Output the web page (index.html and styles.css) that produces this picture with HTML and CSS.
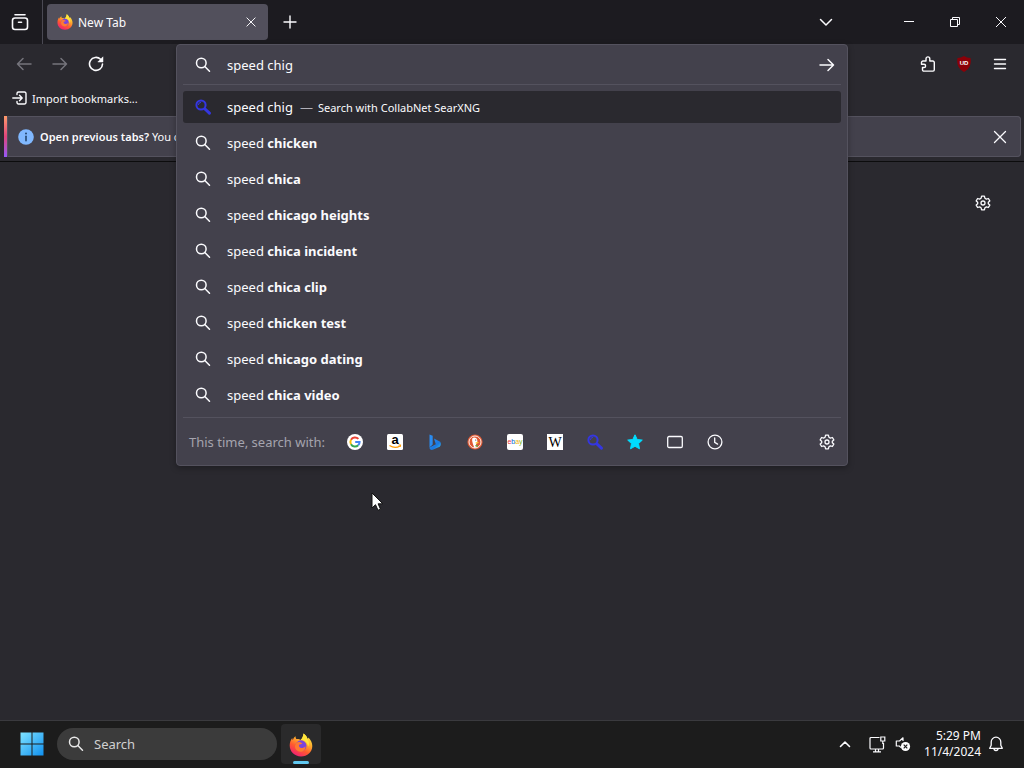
FILE: index.html
```html
<!DOCTYPE html>
<html lang="en">
<head>
  <meta charset="UTF-8">
  <meta name="viewport" content="width=device-width, initial-scale=1.0">
  <title>New Tab</title>
  <link rel="stylesheet" href="styles.css">
</head>
<body>
  <!-- shared icons -->
  <svg class="sprite" aria-hidden="true">
    <defs>
      <linearGradient id="fox-body" x1="0.8" y1="0" x2="0.25" y2="1">
        <stop offset="0" stop-color="#fff24a"/>
        <stop offset="0.35" stop-color="#ffb02e"/>
        <stop offset="0.65" stop-color="#ff5a2e"/>
        <stop offset="1" stop-color="#f0197b"/>
      </linearGradient>
      <linearGradient id="win-blue" x1="0" y1="0" x2="1" y2="1">
        <stop offset="0" stop-color="#7fe3ff"/>
        <stop offset="1" stop-color="#1090f0"/>
      </linearGradient>
      <linearGradient id="bing-blue" x1="0" y1="0" x2="1" y2="1">
        <stop offset="0" stop-color="#2a8cf0"/>
        <stop offset="0.6" stop-color="#1b78e0"/>
        <stop offset="1" stop-color="#35c6ee"/>
      </linearGradient>
    </defs>
    <symbol id="search" viewBox="0 0 16 16">
      <circle cx="6.3" cy="6" r="4.8" fill="none" stroke="currentColor" stroke-width="1.5"/>
      <path d="M9.8 9.5l4.700 4.700" stroke="currentColor" stroke-width="1.5" stroke-linecap="round"/>
    </symbol>
    <symbol id="search-blue" viewBox="0 0 16 16">
      <circle cx="6" cy="6" r="4.6" fill="none" stroke="#3436e0" stroke-width="2"/>
      <path d="M3.4 6a2.6 2.6 0 0 1 2.6-2.6" fill="none" stroke="#3436e0" stroke-width="1"/>
      <path d="M10 10l4.4 4.2" stroke="#3436e0" stroke-width="3" stroke-linecap="round"/>
    </symbol>
    <symbol id="close" viewBox="0 0 16 16">
      <path d="M2.5 2.5l11 11M13.5 2.5l-11 11" stroke="currentColor" stroke-width="1.3" stroke-linecap="round"/>
    </symbol>
    <symbol id="gear" viewBox="0 0 16 16">
      <path d="M6.6 1.2h2.8l.5 2 1.5.9 2-.6 1.4 2.4-1.5 1.4v1.4l1.5 1.4-1.4 2.4-2-.6-1.5.9-.5 2H6.6l-.5-2-1.5-.9-2 .6-1.4-2.4 1.5-1.4V7.3l-1.5-1.4 1.4-2.4 2 .6 1.5-.9z" fill="none" stroke="currentColor" stroke-width="1.3" stroke-linejoin="round"/>
      <circle cx="8" cy="8" r="2" fill="none" stroke="currentColor" stroke-width="1.3"/>
    </symbol>
    <symbol id="arrow" viewBox="0 0 16 16">
      <path d="M1 8h13.5M9 2.5L14.5 8 9 13.5" fill="none" stroke="currentColor" stroke-width="1.5" stroke-linecap="round" stroke-linejoin="round"/>
    </symbol>
    <symbol id="firefox" viewBox="0 0 24 24">
      <path d="M14.5 .5c2.2 1.6 3.6 3.5 4.1 5.4.6-.3.8-.9.8-1.5 2.5 2.5 3.9 5.3 3.9 8.600 0 6-5 10.5-11.3 10.5S.7 18.8.7 12.6c0-2.8.8-5.3 2.5-7.6.1.9.3 1.5.7 2 .6-1.7 1.3-2.7 2.6-3.7 0 1.1.2 2 .8 2.8 2-.2 3.3.2 4.3 1 1.7-1.8 2.8-4 2.9-6.6z" fill="url(#fox-body)"/>
      <circle cx="12" cy="12.8" r="5.5" fill="#7a45dc"/>
      <path d="M7.5 9.5c2.2-1.2 4.5-.5 5.8 1-1 .9-2.3 1-3.3 1.3-.5 1.9.7 3.3 2.6 3.3 1.6 0 2.9-.8 4-1.9-.3 4-2.8 5.7-5.3 5.5-3.5-.2-5.5-2.9-5.3-5.9z" fill="#ff7a30"/>
      <path d="M14.5 .5c2.2 1.6 3.6 3.5 4.1 5.4 1.8 2.6 1.6 5.4.5 7.7-.3-3.3-2.2-5.2-4.7-6.4-1.1-.5-1.8-.3-2.8-.1 1.7-1.8 2.8-4 2.900-6.6z" fill="#ffe53b"/>
    </symbol>
  </svg>

  <div class="window">
    <header class="titlebar">
      <button class="icon-btn view-btn" aria-label="Firefox View">
        <svg width="18" height="18" viewBox="0 0 18 18" fill="none" stroke="currentColor" stroke-width="1.6" stroke-linecap="round">
          <path d="M4 1.8h10"/>
          <rect x="1.5" y="5" width="15" height="11.5" rx="2.5"/>
          <path d="M7.5 9.2h3"/>
        </svg>
      </button>
      <div class="tab">
        <svg class="i16"><use href="#firefox"/></svg>
        <span class="tab-title">New Tab</span>
        <button class="icon-btn" aria-label="Close tab"><svg class="i12"><use href="#close"/></svg></button>
      </div>
      <button class="icon-btn new-tab" aria-label="Open a new tab">
        <svg width="14" height="14" viewBox="0 0 14 14"><path d="M7 1v12M1 7h12" stroke="currentColor" stroke-width="1.4" stroke-linecap="round"/></svg>
      </button>
      <button class="icon-btn all-tabs" aria-label="List all tabs">
        <svg width="14" height="14" viewBox="0 0 14 14"><path d="M1.5 4.5L7 10l5.5-5.5" fill="none" stroke="currentColor" stroke-width="1.5" stroke-linecap="round" stroke-linejoin="round"/></svg>
      </button>
      <div class="window-controls">
        <button class="icon-btn" aria-label="Minimize">
          <svg width="10" height="10" viewBox="0 0 10 10"><path d="M0 4.5h10" stroke="currentColor"/></svg>
        </button>
        <button class="icon-btn" aria-label="Restore">
          <svg width="10" height="10" viewBox="0 0 10 10" fill="none" stroke="currentColor"><path d="M.5 2.5h7v7h-7zM2.5 2.5v-2h7v7h-2"/></svg>
        </button>
        <button class="icon-btn" aria-label="Close">
          <svg width="12" height="12" viewBox="0 0 12 12"><path d="M1 1l10 10M11 1L1 11" stroke="currentColor"/></svg>
        </button>
      </div>
    </header>

    <div class="toolbar">
      <div class="nav-left">
        <button class="icon-btn" aria-label="Back" disabled><svg class="i16 flip"><use href="#arrow"/></svg></button>
        <button class="icon-btn" aria-label="Forward" disabled><svg class="i16"><use href="#arrow"/></svg></button>
        <button class="icon-btn" aria-label="Reload">
          <svg width="16" height="16" viewBox="0 0 16 16">
            <path d="M12.6 3.3A6.5 6.5 0 1 0 14.5 8" fill="none" stroke="currentColor" stroke-width="1.6" stroke-linecap="round"/>
            <path d="M15 .8v5.2H9.8z" fill="currentColor" stroke="currentColor" stroke-width=".5" stroke-linejoin="round"/>
          </svg>
        </button>
      </div>

      <div class="urlbar-slot">
        <div class="urlbar">
          <form class="url-row">
            <svg class="i16"><use href="#search"/></svg>
            <input class="url-input" type="text" value="speed chig" aria-label="Search or enter address">
            <button class="icon-btn" aria-label="Go"><svg class="i16"><use href="#arrow"/></svg></button>
          </form>
          <ul class="results">
            <li class="result selected"><svg class="i16"><use href="#search-blue"/></svg><span>speed chig</span><span class="dash">—</span><span class="action">Search with CollabNet SearXNG</span></li>
            <li class="result"><svg class="i16"><use href="#search"/></svg><span>speed <b>chicken</b></span></li>
            <li class="result"><svg class="i16"><use href="#search"/></svg><span>speed <b>chica</b></span></li>
            <li class="result"><svg class="i16"><use href="#search"/></svg><span>speed <b>chicago heights</b></span></li>
            <li class="result"><svg class="i16"><use href="#search"/></svg><span>speed <b>chica incident</b></span></li>
            <li class="result"><svg class="i16"><use href="#search"/></svg><span>speed <b>chica clip</b></span></li>
            <li class="result"><svg class="i16"><use href="#search"/></svg><span>speed <b>chicken test</b></span></li>
            <li class="result"><svg class="i16"><use href="#search"/></svg><span>speed <b>chicago dating</b></span></li>
            <li class="result"><svg class="i16"><use href="#search"/></svg><span>speed <b>chica video</b></span></li>
          </ul>
          <div class="engines">
            <span class="engines-label">This time, search with:</span>
            <button class="icon-btn" aria-label="Google">
              <svg class="i16" viewBox="0 0 16 16" fill="none" stroke-width="2">
                <circle cx="8" cy="8" r="8" fill="#fff"/>
                <path d="M11.4 4.9A4.6 4.6 0 0 0 4 5.7" stroke="#ea4335"/>
                <path d="M4 5.7a4.6 4.6 0 0 0 0 4.6" stroke="#fbbc05"/>
                <path d="M4 10.3a4.6 4.6 0 0 0 7.2 1" stroke="#34a853"/>
                <path d="M11.2 11.3A4.6 4.6 0 0 0 12.6 8H8.2" stroke="#4285f4"/>
              </svg>
            </button>
            <button class="icon-btn" aria-label="Amazon">
              <svg class="i16" viewBox="0 0 16 16">
                <rect width="16" height="16" rx="1.5" fill="#fff"/>
                <text class="logo-amazon" x="8" y="10" text-anchor="middle">a</text>
                <path d="M2.500 11.500q5.500 3.600 10.500.4" fill="none" stroke="#f90" stroke-width="1.2"/>
                <path d="M11.5 11l2.200-.1-.5 2.100" fill="none" stroke="#f90"/>
              </svg>
            </button>
            <button class="icon-btn" aria-label="Bing">
              <svg class="i16" viewBox="0 0 16 16">
                <path d="M2.500 .5l3.200 1.200v8.800L2.500 13.500z" fill="#2a8cf0"/>
                <path d="M7 4.6l6.200 3.100c1.200 2 .7 3.800-.5 5l-7 3.100c-2 .4-3.200-.8-3.200-2.300l6.300-3.300z" fill="url(#bing-blue)"/>
              </svg>
            </button>
            <button class="icon-btn" aria-label="DuckDuckGo">
              <svg class="i16" viewBox="0 0 16 16">
                <circle cx="8" cy="8" r="7.600" fill="#de5833"/>
                <circle cx="8" cy="8" r="6" fill="#de5833" stroke="#fff" stroke-width=".9"/>
                <path d="M5.200 4.400c1.300-1.500 4.400-1.200 5 1.300.3 1.300.1 2.300.1 3.200l-1.400 1.200.9 3.200-2.400.6c-.9-2.900-2.900-6.600-2.200-9.500z" fill="#fff"/>
                <path d="M8.600 8.300l3.200-.3-.6 1.300-2.600.3z" fill="#fdc828"/>
                <path d="M8.300 11l2.700.2-.6 1.800-2-.7z" fill="#67a843"/>
                <circle cx="8.700" cy="6" r=".6" fill="#333"/>
              </svg>
            </button>
            <button class="icon-btn" aria-label="eBay">
              <svg class="i16" viewBox="0 0 16 16">
                <rect width="16" height="16" rx="2" fill="#fff"/>
                <text class="logo-ebay" x="8" y="10" text-anchor="middle"><tspan fill="#e53238">e</tspan><tspan fill="#0064d2">b</tspan><tspan fill="#f5af02">a</tspan><tspan fill="#86b817">y</tspan></text>
              </svg>
            </button>
            <button class="icon-btn" aria-label="Wikipedia">
              <svg class="i16" viewBox="0 0 16 16">
                <rect width="16" height="16" fill="#fff"/>
                <text class="logo-wiki" x="8" y="13" text-anchor="middle">W</text>
              </svg>
            </button>
            <button class="icon-btn" aria-label="CollabNet SearXNG"><svg class="i16"><use href="#search-blue"/></svg></button>
            <button class="icon-btn" aria-label="Bookmarks">
              <svg class="i16" viewBox="0 0 16 16"><path d="M8 .8l2.200 4.700 5.100.6-3.800 3.500 1 5.200L8 12.300l-4.500 2.500 1-5.200L.7 6.100l5.100-.6z" fill="#00ddff" stroke="#00ddff" stroke-linejoin="round"/></svg>
            </button>
            <button class="icon-btn" aria-label="Tabs">
              <svg class="i16" viewBox="0 0 16 16"><rect x=".7" y="2.500" width="14.600" height="11" rx="1.300" fill="none" stroke="currentColor" stroke-width="1.300"/></svg>
            </button>
            <button class="icon-btn" aria-label="History">
              <svg class="i16" viewBox="0 0 16 16" fill="none" stroke="currentColor" stroke-width="1.3" stroke-linecap="round"><circle cx="8" cy="8" r="6.900"/><path d="M7.700 4v4.300l2.900 1.800"/></svg>
            </button>
            <button class="icon-btn engines-settings" aria-label="Search settings"><svg class="i16"><use href="#gear"/></svg></button>
          </div>
        </div>
      </div>

      <div class="nav-right">
        <button class="icon-btn" aria-label="Extensions">
          <svg width="16" height="16" viewBox="0 0 16 16"><path d="M6 5V2.800a1.900 1.900 0 0 1 3.800 0V5h3a1.500 1.500 0 0 1 1.500 1.500v7.300a1.300 1.300 0 0 1-1.300 1.300H3.800a1.300 1.300 0 0 1-1.300-1.300v-2.300H4a1.600 1.600 0 0 0 0-3.200H1.500V6.500A1.500 1.500 0 0 1 3 5z" fill="none" stroke="currentColor" stroke-width="1.400" stroke-linejoin="round"/></svg>
        </button>
        <button class="icon-btn" aria-label="uBlock Origin">
          <svg width="16" height="16" viewBox="0 0 16 16">
            <path d="M8 0c2 1.300 4 1.800 6.500 1.900C15.600 8 13.500 12.800 8 16 2.500 12.800.4 8 1.500 1.900 4 1.800 6 1.300 8 0z" fill="#8b0008"/>
            <text class="logo-ublock" x="8" y="9" text-anchor="middle">UD</text>
          </svg>
        </button>
        <button class="icon-btn" aria-label="Open application menu">
          <svg width="14" height="14" viewBox="0 0 14 14"><path d="M1.500 2.500h11M1.500 7h11M1.500 11.500h11" stroke="currentColor" stroke-width="1.400" stroke-linecap="round"/></svg>
        </button>
      </div>
    </div>

    <div class="bookmarks">
      <button class="bookmark">
        <svg width="16" height="16" viewBox="0 0 16 16" fill="none" stroke="currentColor" stroke-width="1.400" stroke-linecap="round" stroke-linejoin="round">
          <path d="M5 4.500V3.500A1.500 1.500 0 0 1 6.500 2h6A1.500 1.500 0 0 1 14 3.500v9a1.500 1.500 0 0 1-1.500 1.500h-6A1.500 1.500 0 0 1 5 12.500v-1M.8 8h9M7.500 5.300L10.200 8l-2.700 2.700"/>
        </svg>
        Import bookmarks...
      </button>
    </div>

    <div class="notice">
      <svg width="16" height="16" viewBox="0 0 16 16">
        <circle cx="8" cy="8" r="7.800" fill="#80b8ff"/>
        <path d="M8 7.200v4.600" stroke="#23466f" stroke-width="1.600" stroke-linecap="round"/>
        <circle cx="8" cy="4.600" r="1" fill="#23466f"/>
      </svg>
      <p class="notice-text"><strong>Open previous tabs?</strong> You can</p>
      <button class="icon-btn" aria-label="Dismiss"><svg class="i16"><use href="#close"/></svg></button>
    </div>

    <main class="content">
      <button class="icon-btn" aria-label="Personalize new tab"><svg class="i16"><use href="#gear"/></svg></button>
    </main>
  </div>

  <footer class="taskbar">
    <button class="icon-btn start" aria-label="Start">
      <svg width="24" height="24" viewBox="0 0 24 24"><path d="M.5.5h11v11H.5zM12.500.5h11v11h-11zM.5 12.500h11v11H.5zM12.500 12.500h11v11h-11z" fill="url(#win-blue)"/></svg>
    </button>
    <label class="task-search">
      <svg class="i16"><use href="#search"/></svg>
      <input type="text" placeholder="Search">
    </label>
    <button class="task-app" aria-label="Firefox">
      <svg width="24" height="24"><use href="#firefox"/></svg>
    </button>
    <div class="tray">
      <button class="icon-btn" aria-label="Show hidden icons">
        <svg width="12" height="12" viewBox="0 0 12 12"><path d="M1.500 8.500L6 4l4.500 4.500" fill="none" stroke="currentColor" stroke-width="1.600" stroke-linecap="round" stroke-linejoin="round"/></svg>
      </button>
      <button class="icon-btn tray-status" aria-label="Network and volume">
        <svg width="17" height="17" viewBox="0 0 17 17" fill="none" stroke="currentColor" stroke-width="1.200">
          <path d="M10.500 1.500H2a1 1 0 0 0-1 1v9.500a1 1 0 0 0 1 1h11.500a1 1 0 0 0 1-1V7M4 15.800h8M6.500 13v2.500M9.500 13v2.500"/>
          <path d="M11.800 1h4v4h-4zM13.800 5v3"/>
        </svg>
        <svg width="16" height="16" viewBox="0 0 16 16" fill="none" stroke="currentColor" stroke-width="1.200">
          <path d="M8 5V1.800L4.500 5H1.300v5h3l1.700 1.600" stroke-linejoin="round"/>
          <circle cx="10.500" cy="10.500" r="4.600" fill="#fff" stroke="none"/>
          <path d="M8.700 8.700l3.600 3.600M12.300 8.700l-3.600 3.600" stroke="#1c1c1c"/>
        </svg>
      </button>
      <div class="clock"><time>5:29 PM</time><time>11/4/2024</time></div>
      <button class="icon-btn bell" aria-label="Notifications">
        <svg width="16" height="16" viewBox="0 0 16 16" fill="none" stroke="currentColor" stroke-width="1.300" stroke-linejoin="round"><path d="M8 1.200a4.800 4.800 0 0 0-4.800 4.800v3.200L1.700 12.300h12.600l-1.500-3.100V6A4.800 4.800 0 0 0 8 1.200zM6 12.500a2 2 0 0 0 4 0"/></svg>
      </button>
    </div>
  </footer>

  <svg class="cursor" width="14" height="20" viewBox="0 0 14 20" aria-hidden="true"><path d="M1 1v15l3.500-3.300L7 18.300l2.500-1.100-2.400-5.400h4.700z" fill="#fff" stroke="#111"/></svg>
</body>
</html>
```
FILE: styles.css
```css
* {
  box-sizing: border-box;
}
body {
  margin: 0;
  height: 100vh;
  display: flex;
  flex-direction: column;
  overflow: hidden;
  background: #2a292f;
  color: #fbfbfe;
  font-family: "Noto Sans", "Open Sans", sans-serif;
  font-size: 12px;
}
button,
input {
  font: inherit;
  color: inherit;
  background: none;
  border: none;
  padding: 0;
}
svg {
  display: block;
  flex: none;
}
.sprite {
  position: absolute;
  width: 0;
  height: 0;
}
.i16 {
  width: 16px;
  height: 16px;
}
.i12 {
  width: 12px;
  height: 12px;
}
.flip {
  transform: scaleX(-1);
}
.icon-btn {
  display: flex;
  flex: none;
  align-items: center;
  justify-content: center;
}
.icon-btn:disabled {
  color: #75747c;
}

.window {
  flex: 1;
  display: flex;
  flex-direction: column;
}

/* tab strip */
.titlebar {
  display: flex;
  align-items: center;
  height: 44px;
  background: #1c1b20;
}
.view-btn {
  width: 43px;
  height: 44px;
  padding-right: 3px;
  border-right: 1px solid #4a4953;
}
.tab {
  display: flex;
  align-items: center;
  gap: 5px;
  width: 221px;
  height: 36px;
  margin-left: 4px;
  padding: 0 11px 0 10px;
  border-radius: 4px;
  background: #52505c;
}
.tab-title {
  flex: 1;
}
.new-tab {
  width: 43px;
}
.all-tabs {
  width: 28px;
  margin-left: auto;
}
.window-controls {
  display: flex;
  margin-left: 46px;
}
.window-controls .icon-btn {
  width: 46px;
  height: 44px;
}

/* navigation */
.toolbar {
  display: flex;
  height: 40px;
}
.nav-left,
.nav-right {
  display: flex;
  align-items: center;
  width: 176px;
}
.nav-left {
  padding-left: 6px;
}
.nav-right {
  justify-content: flex-end;
  padding-right: 6px;
}
.nav-left .icon-btn,
.nav-right .icon-btn {
  width: 36px;
  height: 36px;
}
.urlbar-slot {
  position: relative;
  flex: 1;
}
.urlbar {
  position: absolute;
  top: 0;
  left: 0;
  right: 0;
  z-index: 1;
  border: 1px solid #54525e;
  border-radius: 4px;
  background: #43414c;
  box-shadow: 0 2px 6px rgba(0, 0, 0, 0.3);
}
.url-row {
  display: flex;
  align-items: center;
  gap: 16px;
  height: 39px;
  padding: 0 12px 0 18px;
}
.url-input {
  flex: 1;
  min-width: 0;
  font-size: 13px;
  outline: none;
}
.results {
  display: flex;
  flex-direction: column;
  gap: 4px;
  list-style: none;
  margin: 0 6px;
  padding: 6px 0;
  border-top: 1px solid #54525e;
  border-bottom: 1px solid #54525e;
  font-size: 13px;
}
.result {
  display: flex;
  align-items: center;
  height: 32px;
  padding-left: 12px;
  border-radius: 3px;
}
.result .i16 {
  margin-right: 16px;
}
.result b {
  font-weight: 700;
}
.selected {
  background: #2a292f;
}
.dash {
  margin: 0 5px 0 7px;
  color: #b0afb8;
}
.action {
  font-size: 11px;
}
.engines {
  display: flex;
  align-items: center;
  height: 47px;
  padding: 0 12px;
}
.engines-label {
  width: 146px;
  color: #a5a4ae;
  font-size: 13px;
}
.engines .icon-btn {
  width: 40px;
  height: 32px;
}
.engines .engines-settings {
  width: 16px;
  margin-left: auto;
}
.logo-amazon {
  font: bold 13px "Liberation Sans", sans-serif;
}
.logo-ebay {
  font: 7px "Liberation Sans", sans-serif;
}
.logo-wiki {
  font: 14px "Liberation Serif", serif;
}
.logo-ublock {
  font: bold 6px "Liberation Sans", sans-serif;
  fill: #fff;
}

/* bookmarks and session notice */
.bookmarks {
  display: flex;
  align-items: center;
  height: 32px;
  padding: 0 12px 4px;
}
.bookmark {
  display: flex;
  align-items: center;
  gap: 4px;
  font-size: 11px;
}
.notice {
  display: flex;
  align-items: center;
  gap: 6px;
  height: 41px;
  margin: 0 3px 4px 4px;
  padding: 0 13px 0 11px;
  border-left: 3px solid;
  border-image: linear-gradient(#ffa06a, #e0457b, #9059ff) 1 / 0 0 0 3px;
  border-radius: 4px;
  background: #43414c;
  box-shadow: inset 0 0 0 1px #54525e;
}
.notice-text {
  flex: 1;
  margin: 0;
  font-size: 11px;
}
.notice strong {
  font-weight: 600;
}
.content {
  flex: 1;
  display: flex;
  justify-content: flex-end;
  align-items: flex-start;
  padding: 33px 33px 0 0;
  border-top: 1px solid #0c0c0d;
}

/* taskbar */
.taskbar {
  display: flex;
  align-items: center;
  height: 48px;
  padding-bottom: 1px;
  background: #1c1c1c;
  border-top: 1px solid #3a3a3e;
}
.start {
  width: 50px;
  margin-left: 7px;
}
.task-search {
  display: flex;
  align-items: center;
  gap: 10px;
  width: 220px;
  height: 32px;
  padding: 0 11px;
  border-radius: 16px;
  background: #3b3b3b;
  color: #e8e8e8;
  font-size: 13px;
}
.task-search input {
  flex: 1;
  min-width: 0;
}
.task-search input::placeholder {
  color: #d0d0d0;
}
.task-app {
  display: flex;
  flex-direction: column;
  align-items: center;
  justify-content: flex-end;
  gap: 4px;
  width: 40px;
  height: 40px;
  margin-left: 4px;
  border-radius: 4px;
  background: #2a2a2b;
}
.task-app::after {
  content: "";
  width: 16px;
  height: 3px;
  border-radius: 2px;
  background: #60c8f0;
}
.tray {
  display: flex;
  align-items: center;
  margin-left: auto;
  padding-right: 20px;
}
.tray-status {
  gap: 9px;
  margin: 0 13px 0 18px;
}
.clock {
  display: flex;
  flex-direction: column;
  align-items: flex-end;
  font-size: 12px;
  line-height: 16px;
}
.bell {
  margin-left: 7px;
}
.cursor {
  position: absolute;
  top: 492px;
  left: 371px;
}
```
